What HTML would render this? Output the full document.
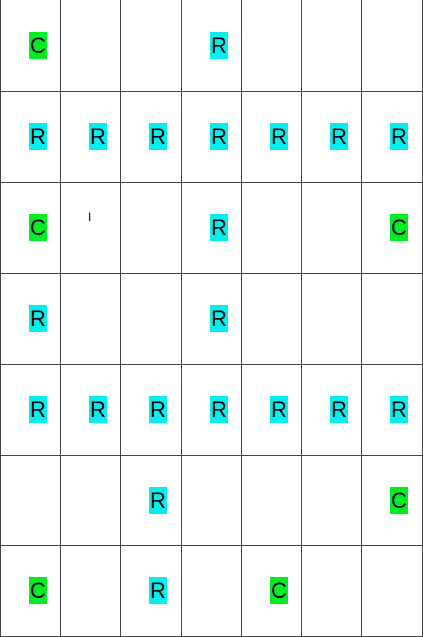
<!DOCTYPE html><html><head><style>
body{margin:0;width:423px;height:637px;background:#fff;position:relative;overflow:hidden;font-family:"Liberation Sans",sans-serif}
.v{position:absolute;top:0;width:1px;height:637px;background:#444}
.h{position:absolute;left:0;height:1px;width:423px;background:#444}
.l{position:absolute;width:18px;height:27px;line-height:27px;text-align:center;font-size:22px;color:#000}
.c{background:#00ee22}.r{background:#00f0f0}
</style></head><body>
<div class="v" style="left:0"></div><div class="v" style="left:60px"></div><div class="v" style="left:120px"></div><div class="v" style="left:181px"></div><div class="v" style="left:241px"></div><div class="v" style="left:301px"></div><div class="v" style="left:361px"></div><div class="v" style="left:422px"></div>
<div class="h" style="top:91px"></div><div class="h" style="top:182px"></div><div class="h" style="top:273px"></div><div class="h" style="top:364px"></div><div class="h" style="top:455px"></div><div class="h" style="top:545px"></div><div class="h" style="top:636px"></div>
<div id="g"></div>
<div style="position:absolute;left:88px;top:211px;font-size:12px;line-height:12px">I</div>
<script>
var m=["C  R   ","RRRRRRR","C  R  C","R  R   ","RRRRRRR","  R   C","C R C  "];
var xs=[0,60,120,181,241,301,361],ys=[0,91,182,273,364,455,545],h="";
m.forEach(function(row,i){for(var j=0;j<7;j++){var ch=row[j];if(ch!=" ")h+='<div class="l '+ch.toLowerCase()+'" style="left:'+(xs[j]+29)+'px;top:'+(ys[i]+32)+'px">'+ch+'</div>';}});
document.getElementById("g").innerHTML=h;
</script>
</body></html>
